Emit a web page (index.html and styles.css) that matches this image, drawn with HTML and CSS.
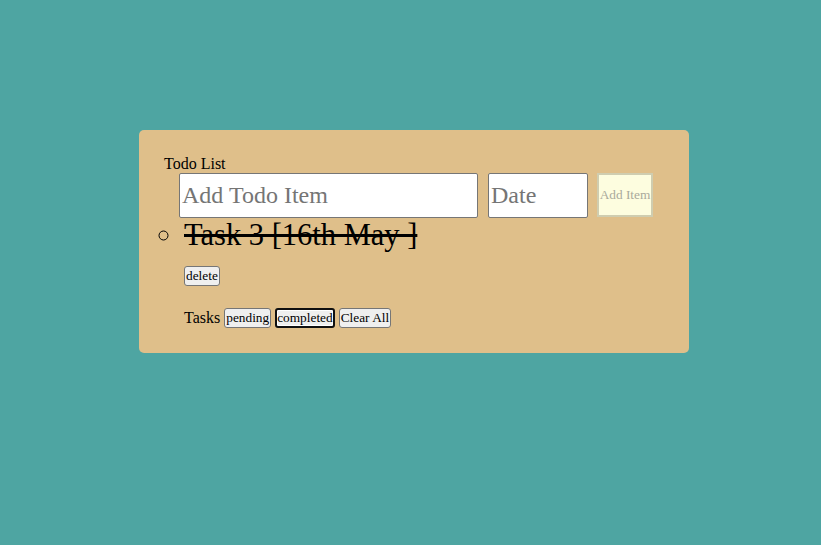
FILE: index.html
```html
<!DOCTYPE html>
<html>
<head>
<meta charset="utf-8">
<title>Todo List</title>
<link rel="stylesheet" href="styles.css">
</head>
<body>
<div class="page">
  <div class="card">
    <div class="title">Todo List</div>
    <form class="add-form">
      <input class="todo-input" type="text" placeholder="Add Todo Item">
      <input class="date-input" type="text" placeholder="Date">
      <button class="add-btn" type="button" disabled>Add Item</button>
    </form>
    <ul class="todo-list">
      <li class="todo-item">
        <span class="todo-text">Task 3 [16th May ]</span>
        <div class="item-actions"><button class="btn" type="button">delete</button></div>
      </li>
    </ul>
    <div class="filters">
      <span class="filters-label">Tasks</span>
      <button class="btn" type="button">pending</button>
      <button class="btn btn-active" type="button">completed</button>
      <button class="btn" type="button">Clear All</button>
    </div>
  </div>
</div>
</body>
</html>
```

FILE: styles.css
```css
html, body {
  margin: 0;
  padding: 0;
}
body {
  background: #4ea5a2;
  font-family: "Liberation Serif", "Times New Roman", serif;
  font-size: 16px;
  color: #000;
  width: 821px;
  height: 545px;
}
.page {
  padding: 130px 0 0 139px;
}
.card {
  width: 550px;
  height: 223px;
  box-sizing: border-box;
  background: #dfbf8a;
  border-radius: 5px;
  padding: 25px 25px 25px 25px;
}
.title {
  line-height: 18px;
}
.add-form {
  display: flex;
  margin: 0;
  padding-left: 15px;
}
.todo-input,
.date-input {
  box-sizing: border-box;
  height: 45px;
  border: 1px solid #767676;
  border-radius: 2px;
  padding: 0 2px;
  font-family: "Liberation Serif", "Times New Roman", serif;
  font-size: 24px;
  background: #fff;
  color: #000;
}
.todo-input::placeholder,
.date-input::placeholder {
  color: #757575;
}
.todo-input {
  width: 299px;
}
.date-input {
  width: 100px;
  margin-left: 10px;
}
.add-btn {
  box-sizing: border-box;
  width: 56px;
  height: 44px;
  margin-left: 9px;
  padding: 0;
  white-space: nowrap;
  background: #fdfddf;
  border: 2px solid #cfcdb0;
  border-radius: 0;
  font-family: "Liberation Serif", "Times New Roman", serif;
  font-size: 13.33px;
  color: #aaaa9c;
}
.todo-list {
  list-style: circle;
  margin: 0;
  padding-left: 20px;
}
.todo-item {
  font-size: 30.5px;
}
.todo-text {
  text-decoration: line-through;
}
.item-actions {
  display: flex;
  margin-top: 13px;
}
.btn {
  font-family: "Liberation Serif", "Times New Roman", serif;
  font-size: 13.33px;
  line-height: normal;
  padding: 1px 1px;
  background: #efefef;
  border: 1px solid #767676;
  border-radius: 3px;
  color: #000;
  height: 20px;
  box-sizing: border-box;
}
.filters {
  display: flex;
  align-items: center;
  margin-top: 22px;
  padding-left: 20px;
  gap: 4px;
}
.filters-label {
  line-height: 18px;
}
.btn-active {
  border: 2px solid #101010;
  box-shadow: inset 0 0 0 1px #fff;
  padding: 0;
}
```
